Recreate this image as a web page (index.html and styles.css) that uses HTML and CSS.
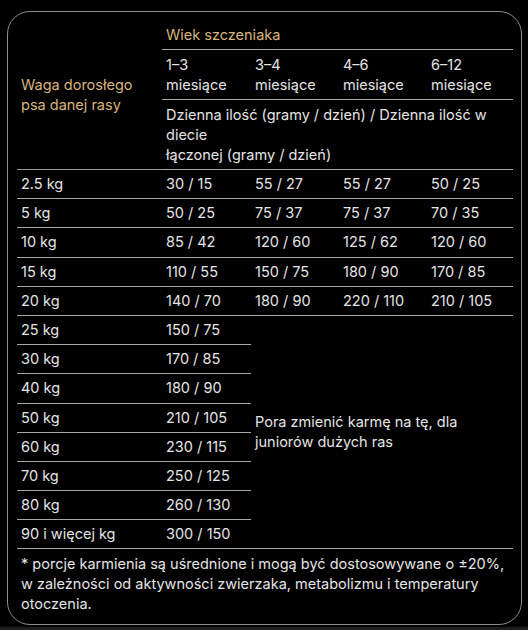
FILE: index.html
```html
<!DOCTYPE html>
<html lang="pl">
<head>
<meta charset="utf-8">
<title>Tabela karmienia</title>
<link rel="stylesheet" href="styles.css">
</head>
<body>
<div class="page">
  <div class="card">
    <table class="feed">
      <colgroup>
        <col class="c1"><col class="c2"><col class="c3"><col class="c4"><col class="c5">
      </colgroup>
      <thead>
        <tr>
          <th rowspan="3" class="gold weight-head">Waga dorosłego<br>psa danej rasy</th>
          <th colspan="4" class="gold">Wiek szczeniaka</th>
        </tr>
        <tr>
          <th>1–3<br>miesiące</th>
          <th>3–4<br>miesiące</th>
          <th>4–6<br>miesiące</th>
          <th>6–12<br>miesiące</th>
        </tr>
        <tr>
          <th colspan="4">Dzienna ilość (gramy / dzień) / Dzienna ilość w<br>diecie<br>łączonej (gramy / dzień)</th>
        </tr>
      </thead>
      <tbody>
        <tr><td>2.5 kg</td><td>30 / 15</td><td>55 / 27</td><td>55 / 27</td><td>50 / 25</td></tr>
        <tr><td>5 kg</td><td>50 / 25</td><td>75 / 37</td><td>75 / 37</td><td>70 / 35</td></tr>
        <tr><td>10 kg</td><td>85 / 42</td><td>120 / 60</td><td>125 / 62</td><td>120 / 60</td></tr>
        <tr><td>15 kg</td><td>110 / 55</td><td>150 / 75</td><td>180 / 90</td><td>170 / 85</td></tr>
        <tr><td>20 kg</td><td>140 / 70</td><td>180 / 90</td><td>220 / 110</td><td>210 / 105</td></tr>
        <tr><td>25 kg</td><td>150 / 75</td><td colspan="3" rowspan="8" class="note">Pora zmienić karmę na tę, dla<br>juniorów dużych ras</td></tr>
        <tr><td>30 kg</td><td>170 / 85</td></tr>
        <tr><td>40 kg</td><td>180 / 90</td></tr>
        <tr><td>50 kg</td><td>210 / 105</td></tr>
        <tr><td>60 kg</td><td>230 / 115</td></tr>
        <tr><td>70 kg</td><td>250 / 125</td></tr>
        <tr><td>80 kg</td><td>260 / 130</td></tr>
        <tr><td>90 i więcej kg</td><td>300 / 150</td></tr>
      </tbody>
    </table>
    <p class="footnote">* porcje karmienia są uśrednione i mogą być dostosowywane o ±20%,<br>w zależności od aktywności zwierzaka, metabolizmu i temperatury<br>otoczenia.</p>
  </div>
</div>
</body>
</html>
```
FILE: styles.css
```css
html {
  background: #1c1e21;
}
body {
  margin: 0;
  font-family: "Inter", "Lato", sans-serif;
  font-size: 14.5px;
  color: #e4e4e4;
}
.page {
  background: #000;
  height: 627px;
  padding: 11px 0 0 7px;
  box-sizing: border-box;
}
.card {
  width: 515px;
  height: 614px;
  box-sizing: border-box;
  border: 1px solid #8e8e8e;
  border-radius: 23px;
  padding: 8px 8px 0 9px;
}
.feed {
  width: 496px;
  border-collapse: collapse;
  table-layout: fixed;
}
.c1 { width: 145px; }
.c2 { width: 89px; }
.c3 { width: 88px; }
.c4 { width: 88px; }
.c5 { width: 86px; }
.feed th,
.feed td {
  font-weight: 400;
  text-align: left;
  vertical-align: top;
  line-height: 20px;
  padding: 4px 4px 4.2px;
  border-bottom: 1px solid #a8a8a8;
}
.feed thead th {
  padding-top: 4.5px;
  padding-bottom: 4.5px;
}
.gold {
  color: #d8b47e;
}
.feed th.weight-head {
  vertical-align: middle;
  border-bottom-color: #9a9a9a;
}
.feed td.note {
  vertical-align: middle;
}
.footnote {
  margin: 0;
  padding: 5px 4px 0;
  line-height: 20px;
}
```
